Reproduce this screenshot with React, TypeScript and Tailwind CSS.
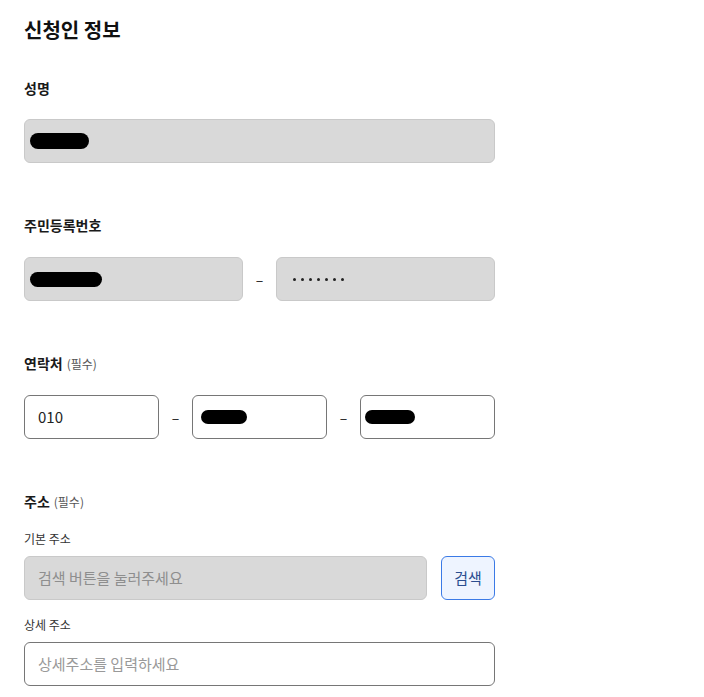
import React from "react";

const font = { fontFamily: '"Noto Sans CJK KR", "Noto Sans", sans-serif' };

function Blob({ w, h = 15 }: { w: number; h?: number }) {
  return <span className="block rounded-full bg-black" style={{ width: w, height: h }} />;
}

function Label({ children, sub }: { children: React.ReactNode; sub?: boolean }) {
  return (
    <div className="h-5 text-[14px] leading-5 font-bold text-[#1a1a1a]">
      {children}
      {sub && <span className="ml-1 text-[12px] font-normal text-[#555]">(필수)</span>}
    </div>
  );
}

function Dash() {
  return <span className="w-[33px] shrink-0 text-center text-[14px] text-[#222]">–</span>;
}

export default function App() {
  return (
    <div className="min-h-[697px] w-[704px] bg-white pl-6" style={font}>
      <div className="w-[471px] pt-4">
        <h1 className="h-7 text-[20px] leading-7 font-bold text-[#111]">신청인 정보</h1>

        <div className="mt-[34px]">
          <Label>성명</Label>
          <div className="mt-[21px] flex h-11 items-center rounded-md border border-[#c9c9c9] bg-[#d9d9d9] pl-[5px]">
            <Blob w={59} h={16} />
          </div>
        </div>

        <div className="mt-[52px]">
          <Label>주민등록번호</Label>
          <div className="mt-[22px] flex items-center">
            <div className="flex h-11 w-[219px] items-center rounded-md border border-[#c9c9c9] bg-[#d9d9d9] pl-[5px]">
              <Blob w={72} />
            </div>
            <Dash />
            <div className="flex h-11 w-[219px] items-center gap-[5px] rounded-md border border-[#c9c9c9] bg-[#d9d9d9] pl-4" aria-label="password">
              <span className="block h-[3px] w-[3px] rounded-full bg-[#222]" />
              <span className="block h-[3px] w-[3px] rounded-full bg-[#222]" />
              <span className="block h-[3px] w-[3px] rounded-full bg-[#222]" />
              <span className="block h-[3px] w-[3px] rounded-full bg-[#222]" />
              <span className="block h-[3px] w-[3px] rounded-full bg-[#222]" />
              <span className="block h-[3px] w-[3px] rounded-full bg-[#222]" />
              <span className="block h-[3px] w-[3px] rounded-full bg-[#222]" />
            </div>
          </div>
        </div>

        <div className="mt-[52px]">
          <Label sub>연락처</Label>
          <div className="mt-[22px] flex items-center">
            <div className="flex h-11 w-[135px] items-center rounded-md border border-[#767676] bg-white pl-[13px] text-[15px] text-[#222]">
              010
            </div>
            <Dash />
            <div className="flex h-11 w-[135px] items-center rounded-md border border-[#767676] bg-white pl-[8px]">
              <Blob w={46} h={14} />
            </div>
            <Dash />
            <div className="flex h-11 w-[135px] items-center rounded-md border border-[#767676] bg-white pl-[4px]">
              <Blob w={50} h={14} />
            </div>
          </div>
        </div>

        <div className="mt-[52px]">
          <Label sub>주소</Label>
          <div className="mt-[18px] h-5 text-[12px] leading-5 text-[#333]">기본 주소</div>
          <div className="mt-[7px] flex items-center gap-[14px]">
            <div className="flex h-11 flex-1 items-center rounded-md border border-[#c9c9c9] bg-[#d9d9d9] pl-[13px] text-[15px] text-[#8e8e8e]">
              검색 버튼을 눌러주세요
            </div>
            <button className="flex h-11 w-[54px] items-center justify-center rounded-md border border-[#3b7ae6] bg-[#eef4ff] text-[15px] text-[#2a4d8f]">
              검색
            </button>
          </div>
          <div className="mt-[15px] h-5 text-[12px] leading-5 text-[#333]">상세 주소</div>
          <div className="mt-[7px] flex h-11 items-center rounded-md border border-[#767676] bg-white pl-[13px] text-[15px] text-[#999]">
            상세주소를 입력하세요
          </div>
        </div>
      </div>
    </div>
  );
}
